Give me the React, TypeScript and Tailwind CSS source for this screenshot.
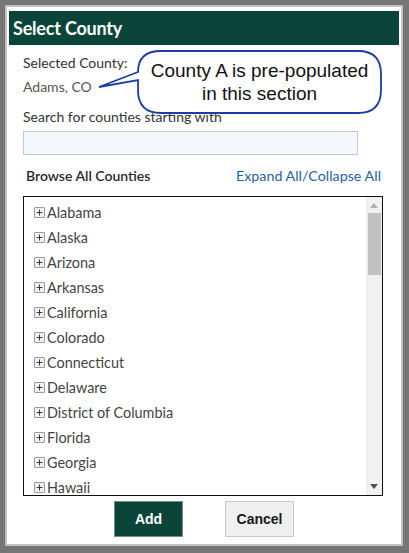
import React from 'react';

const STATES = [
  'Alabama',
  'Alaska',
  'Arizona',
  'Arkansas',
  'California',
  'Colorado',
  'Connecticut',
  'Delaware',
  'District of Columbia',
  'Florida',
  'Georgia',
  'Hawaii',
];

function PlusBox() {
  return (
    <span className="w-[11px] h-[11px] border border-[#9a9a9a] bg-[#f1f1f1] rounded-[1px] flex items-center justify-center shrink-0">
      <svg width="9" height="9" viewBox="0 0 9 9">
        <path d="M4.5 1.5v6M1.5 4.5h6" stroke="#3a3a3a" strokeWidth="1" />
      </svg>
    </span>
  );
}

export default function App() {
  return (
    <div className="relative w-[409px] h-[553px] overflow-hidden bg-[#767676] pt-[5px] pl-[5px] font-['Lato','Liberation_Sans',sans-serif]">
      <div className="w-[398px] h-[541px] bg-[#c2c2c2] p-[2px]">
        <div className="h-full bg-white pt-[4px] px-[2px] flex flex-col">
          <div className="h-[34px] bg-[#0b4539] pl-[4px] flex items-center">
            <h1 className="text-white text-[18px] font-bold tracking-[-0.2px]">Select County</h1>
          </div>

          <div className="pl-[14px] pr-[16px] flex flex-col">
            <p className="mt-[8px] text-[14px] leading-[20px] text-[#333]">Selected County:</p>
            <p className="mt-[4px] text-[14px] leading-[20px] text-[#555]">Adams, CO</p>
            <p className="mt-[10px] text-[14px] leading-[20px] text-[#333]">Search for counties starting with</p>
            <input className="mt-[4px] w-[335px] h-[24px] bg-[#f2f8fd] border border-[#c8c8c8] outline-none" />

            <div className="mt-[11px] flex items-center justify-between pl-[3px] pr-[2px]">
              <span className="text-[14px] leading-[20px] text-[#2a2a2a] font-semibold">Browse All Counties</span>
              <a className="text-[14.3px] leading-[20px] text-[#1f5fa6]">Expand All/Collapse All</a>
            </div>

            <div className="mt-[10px] w-[360px] h-[300px] border border-[#111] flex">
              <ul className="flex-1 pt-[3px] pl-[10px] overflow-hidden">
                {STATES.map(s => (
                  <li key={s} className="h-[25px] flex items-center gap-[2px] text-[14.4px] text-[#444] shrink-0">
                    <PlusBox />
                    <span>{s}</span>
                  </li>
                ))}
              </ul>
              <div className="w-[16px] bg-[#f1f1f1] flex flex-col items-center">
                <svg className="mt-[6px]" width="8" height="5" viewBox="0 0 8 5">
                  <path d="M0 5L4 0L8 5Z" fill="#b0b0b0" />
                </svg>
                <div className="mt-[5px] w-[13px] h-[62px] bg-[#c1c1c1]" />
                <div className="flex-1" />
                <svg className="mb-[6px]" width="8" height="5" viewBox="0 0 8 5">
                  <path d="M0 0L8 0L4 5Z" fill="#505050" />
                </svg>
              </div>
            </div>
          </div>

          <div className="mt-[5px] flex justify-center gap-[42px] font-['Liberation_Sans',Arial,sans-serif]">
            <button className="w-[69px] h-[36px] bg-[#0b4539] border border-[#6f8f86] text-white text-[14px] font-bold">Add</button>
            <button className="w-[69px] h-[36px] bg-[#efefef] border border-[#c8c8c8] text-[#1a1a1a] text-[14px] font-bold">Cancel</button>
          </div>
        </div>
      </div>

      {/* callout overlay */}
      <svg className="absolute left-0 top-0 pointer-events-none" width="409" height="553" viewBox="0 0 409 553">
        <path
          d="M161 51 H358 Q381 51 381 74 V90 Q381 113 358 113 H161 Q138 113 138 90 V80 L99 87 L138 72 Q138 51 161 51 Z"
          fill="white"
          stroke="#1b3da3"
          strokeWidth="1.8"
        />
      </svg>
      <div className="absolute left-[138px] top-[51px] w-[243px] h-[62px] flex flex-col items-center justify-center font-['Liberation_Sans',Arial,sans-serif] text-[19px] leading-[23px] text-[#111] pointer-events-none">
        <span>County A is pre-populated</span>
        <span>in this section</span>
      </div>
    </div>
  );
}
